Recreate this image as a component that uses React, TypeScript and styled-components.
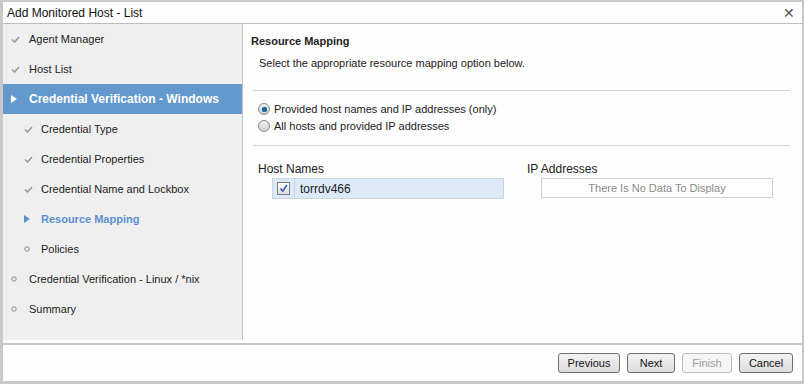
import styled, { createGlobalStyle } from "styled-components";

const Global = createGlobalStyle`
  html, body { margin: 0; padding: 0; background: #ffffff; }
  body { font-family: Tahoma, "Liberation Sans", Arial, sans-serif; font-size: 11px; color: #222; }
`;

const Dialog = styled.div`
  width: 804px;
  height: 384px;
  box-sizing: border-box;
  border: 3px solid #c9c9c9;
  border-top-width: 2px;
  border-right-width: 2px;
  background: #fdfdfd;
  display: flex;
  flex-direction: column;
`;

const TitleBar = styled.div`
  height: 21px;
  display: flex;
  align-items: center;
  justify-content: space-between;
  padding: 0 7px 0 4px;
  border-bottom: 1px solid #bdbdbd;
  background: #fefefe;
  font-size: 12px;
  color: #111;
`;

const Close = styled.span`
  font-size: 14px;
  color: #555;
  line-height: 1;
`;

const Body = styled.div`
  flex: 1;
  display: flex;
  min-height: 0;
`;

const Nav = styled.div`
  width: 239px;
  background: #efefef;
  border-right: 1px solid #c3c3c3;
  margin-bottom: 3px;
`;

const NavItem = styled.div<{ $level: number; $active?: boolean; $current?: boolean }>`
  height: 30px;
  display: flex;
  align-items: center;
  padding-left: ${(p) => (p.$level === 0 ? 8 : 21)}px;
  background: ${(p) => (p.$active ? "#6499cd" : "transparent")};
  color: ${(p) => (p.$active ? "#fff" : p.$current ? "#5b8fd0" : "#222")};
  font-weight: ${(p) => (p.$active || p.$current ? "bold" : "normal")};
  font-size: ${(p) => (p.$active ? "12px" : "11px")};
`;

const Marker = styled.span<{ $w: number }>`
  width: ${(p) => p.$w}px;
  display: inline-flex;
  align-items: center;
  justify-content: flex-start;
`;

const Content = styled.div`
  flex: 1;
  padding: 10px 12px 0 8px;
  display: flex;
  flex-direction: column;
`;

const Heading = styled.div`
  font-weight: bold;
  font-size: 11px;
  color: #222;
  margin-top: 1px;
`;

const Intro = styled.div`
  margin: 10px 0 21px 8px;
  color: #222;
`;

const Rule = styled.div`
  height: 1px;
  background: #d6d6d6;
  margin-left: 2px;
`;

const RadioGroup = styled.div`
  display: flex;
  flex-direction: column;
  gap: 3px;
  padding: 11px 0 12px 7px;
`;

const RadioRow = styled.label`
  display: flex;
  align-items: center;
  gap: 4px;
  height: 14px;
  color: #222;
`;

const Radio = styled.span<{ $on?: boolean }>`
  width: 10px;
  height: 10px;
  border-radius: 50%;
  border: 1px solid #8a8a8a;
  background: linear-gradient(#f2f2f2, #cfcfcf);
  display: inline-flex;
  align-items: center;
  justify-content: center;
  &::after {
    content: "";
    width: 5px;
    height: 5px;
    border-radius: 50%;
    background: ${(p) => (p.$on ? "#1e5f9e" : "transparent")};
    box-shadow: ${(p) => (p.$on ? "0 0 1px #4da3e0" : "none")};
  }
`;

const Lists = styled.div`
  display: grid;
  grid-template-columns: 269px 1fr;
  padding: 16px 0 0 7px;
`;

const ListLabel = styled.div`
  font-size: 12px;
  color: #222;
  margin-bottom: 2px;
`;

const ListBox = styled.div`
  margin-left: 14px;
  width: 232px;
  height: 21px;
  box-sizing: border-box;
  border: 1px solid #cfcfcf;
  display: flex;
  align-items: center;
`;

const HostRow = styled(ListBox)`
  background: #dce9f8;
  border-color: #c9d3de;
`;

const CheckCell = styled.div`
  width: 21px;
  height: 100%;
  border-right: 1px solid #c9d3de;
  display: flex;
  align-items: center;
  justify-content: center;
`;

const Check = styled.span`
  width: 11px;
  height: 11px;
  border: 1px solid #7a7a7a;
  background: linear-gradient(#ffffff, #dcdcdc);
  display: flex;
  align-items: center;
  justify-content: center;
`;

const HostText = styled.span`
  padding-left: 5px;
  font-size: 12px;
  color: #222;
`;

const Empty = styled(ListBox)`
  justify-content: center;
  color: #8a8a8a;
  background: #fff;
  height: 20px;
`;

const Footer = styled.div`
  height: 36px;
  border-top: 2px solid #c6c6c6;
  display: flex;
  align-items: center;
  justify-content: flex-end;
  gap: 7px;
  padding-right: 9px;
  background: #fefefe;
`;

const Button = styled.button<{ $w: number }>`
  width: ${(p) => p.$w}px;
  height: 20px;
  font-family: inherit;
  font-size: 11px;
  color: ${(p) => (p.disabled ? "#9a9a9a" : "#111")};
  border: 1px solid ${(p) => (p.disabled ? "#bdbdbd" : "#707070")};
  border-radius: 3px;
  background: ${(p) => (p.disabled ? "#f6f6f6" : "linear-gradient(#f3f3f3, #dcdcdc)")};
  padding: 0;
`;

const Tick = () => (
  <svg width="9" height="7" viewBox="0 0 9 7">
    <path d="M1 3.5 L3.5 6 L8 1" fill="none" stroke="#9a9a9a" strokeWidth="1.6" />
  </svg>
);

const Arrow = ({ color }: { color: string }) => (
  <svg width="6" height="8" viewBox="0 0 6 8">
    <path d="M0 0 L6 4 L0 8 Z" fill={color} />
  </svg>
);

const Dot = () => (
  <svg width="6" height="6" viewBox="0 0 6 6">
    <circle cx="3" cy="3" r="2.2" fill="none" stroke="#8a8a8a" strokeWidth="1" />
  </svg>
);

type Step = { label: string; level: number; state: "done" | "active" | "current" | "todo" };

const steps: Step[] = [
  { label: "Agent Manager", level: 0, state: "done" },
  { label: "Host List", level: 0, state: "done" },
  { label: "Credential Verification - Windows", level: 0, state: "active" },
  { label: "Credential Type", level: 1, state: "done" },
  { label: "Credential Properties", level: 1, state: "done" },
  { label: "Credential Name and Lockbox", level: 1, state: "done" },
  { label: "Resource Mapping", level: 1, state: "current" },
  { label: "Policies", level: 1, state: "todo" },
  { label: "Credential Verification - Linux / *nix", level: 0, state: "todo" },
  { label: "Summary", level: 0, state: "todo" },
];

export default function App() {
  return (
    <>
      <Global />
      <Dialog>
        <TitleBar>
          <span>Add Monitored Host - List</span>
          <Close>✕</Close>
        </TitleBar>
        <Body>
          <Nav>
            {steps.map((s) => (
              <NavItem key={s.label} $level={s.level} $active={s.state === "active"} $current={s.state === "current"}>
                <Marker $w={s.level === 0 ? 18 : 17}>
                  {s.state === "done" && <Tick />}
                  {s.state === "active" && <Arrow color="#fff" />}
                  {s.state === "current" && <Arrow color="#5b8fd0" />}
                  {s.state === "todo" && <Dot />}
                </Marker>
                {s.label}
              </NavItem>
            ))}
          </Nav>
          <Content>
            <Heading>Resource Mapping</Heading>
            <Intro>Select the appropriate resource mapping option below.</Intro>
            <Rule />
            <RadioGroup>
              <RadioRow>
                <Radio $on />
                Provided host names and IP addresses (only)
              </RadioRow>
              <RadioRow>
                <Radio />
                All hosts and provided IP addresses
              </RadioRow>
            </RadioGroup>
            <Rule />
            <Lists>
              <div>
                <ListLabel>Host Names</ListLabel>
                <HostRow>
                  <CheckCell>
                    <Check>
                      <svg width="9" height="9" viewBox="0 0 9 9">
                        <path d="M1.5 4.5 L3.8 7.2 L7.8 1" fill="none" stroke="#3a5fb0" strokeWidth="1.6" />
                      </svg>
                    </Check>
                  </CheckCell>
                  <HostText>torrdv466</HostText>
                </HostRow>
              </div>
              <div>
                <ListLabel>IP Addresses</ListLabel>
                <Empty>There Is No Data To Display</Empty>
              </div>
            </Lists>
          </Content>
        </Body>
        <Footer>
          <Button $w={62}>Previous</Button>
          <Button $w={48}>Next</Button>
          <Button $w={50} disabled>
            Finish
          </Button>
          <Button $w={54}>Cancel</Button>
        </Footer>
      </Dialog>
    </>
  );
}
